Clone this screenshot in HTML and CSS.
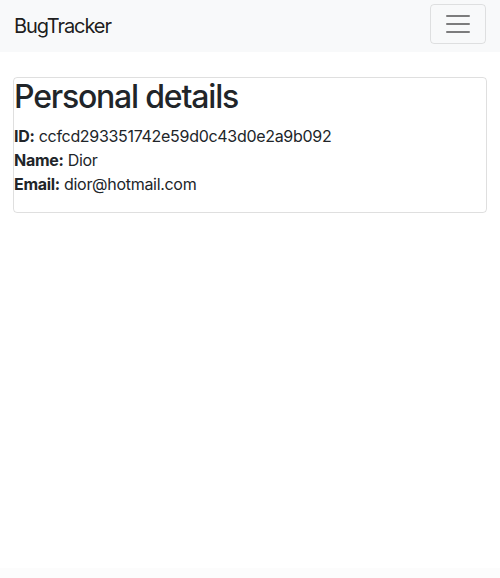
FILE: index.html
```html
<!DOCTYPE html>
<html lang="en">
<head>
<meta charset="utf-8">
<title>BugTracker</title>
<link rel="stylesheet" href="styles.css">
</head>
<body>
<div class="page">
  <nav class="navbar">
    <a class="brand" href="#">BugTracker</a>
    <button class="toggler" type="button" aria-label="Toggle navigation">
      <svg class="toggler-icon" width="30" height="30" viewBox="0 0 30 30"><path d="M4 7h22M4 15h22M4 23h22" stroke="rgba(0,0,0,0.5)" stroke-width="2" stroke-linecap="round" fill="none"/></svg>
    </button>
  </nav>
  <main class="main">
    <section class="card">
      <h2 class="title">Personal details</h2>
      <p class="details"><b>ID:</b> ccfcd293351742e59d0c43d0e2a9b092<br><b>Name:</b> Dior<br><b>Email:</b> dior@hotmail.com</p>
    </section>
  </main>
  <footer class="footer"></footer>
</div>
</body>
</html>
```

FILE: styles.css
```css
* { box-sizing: border-box; }
html, body { margin: 0; padding: 0; }
body {
  font-family: Inter, "Liberation Sans", sans-serif;
  font-size: 16px;
  line-height: 1.5;
  color: #212529;
  background: #fff;
}
.page {
  min-height: 100vh;
  display: flex;
  flex-direction: column;
}
.navbar {
  height: 52px;
  background: #f8f9fa;
  display: flex;
  align-items: center;
  justify-content: space-between;
  padding: 0 14px 0 14px;
}
.brand {
  font-size: 20px;
  line-height: 30px;
  letter-spacing: -1.1px;
  color: rgba(0,0,0,0.9);
  text-decoration: none;
}
.toggler {
  width: 56px;
  height: 40px;
  margin-top: -4px;
  padding: 0;
  background: transparent;
  border: 1px solid rgba(0,0,0,0.1);
  border-radius: 4px;
  display: flex;
  align-items: center;
  justify-content: center;
}
.toggler-icon { display: block; }
.main {
  flex: 1;
  padding: 25px 13px 0;
}
.card {
  border: 1px solid rgba(0,0,0,0.125);
  border-radius: 4px;
}
.title {
  margin: 0 0 8px;
  font-size: 32px;
  font-weight: 500;
  line-height: 1.2;
  letter-spacing: -1.2px;
}
.details {
  margin: 0 0 16px;
  letter-spacing: -0.3px;
}
.details b { font-weight: 700; }
.footer {
  height: 10px;
  background: #fcfcfc;
}
```
